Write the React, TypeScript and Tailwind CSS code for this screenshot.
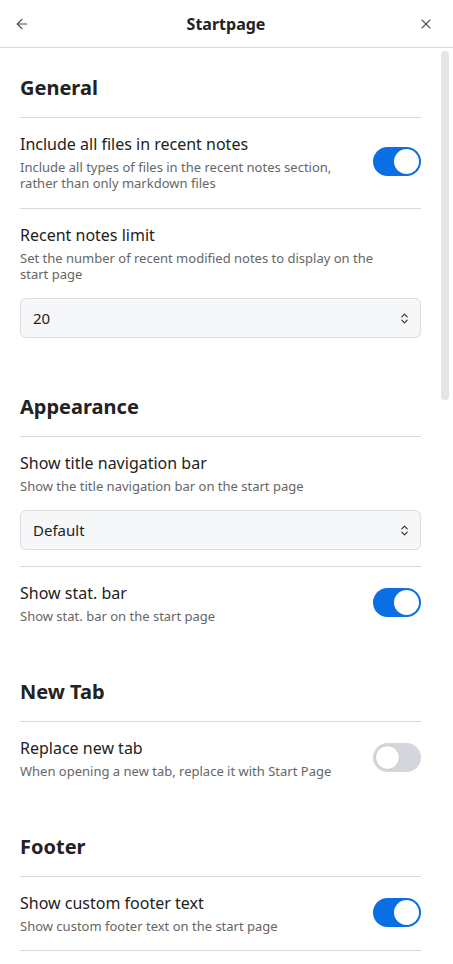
import { ArrowLeft, X, ChevronsUpDown } from 'lucide-react'

type Item =
  | { kind: 'toggle'; name: string; desc: string; on: boolean }
  | { kind: 'select'; name: string; desc: string; value: string }

interface Section {
  title: string
  items: Item[]
}

const SECTIONS: Section[] = [
  {
    title: 'General',
    items: [
      {
        kind: 'toggle',
        name: 'Include all files in recent notes',
        desc: 'Include all types of files in the recent notes section, rather than only markdown files',
        on: true,
      },
      {
        kind: 'select',
        name: 'Recent notes limit',
        desc: 'Set the number of recent modified notes to display on the start page',
        value: '20',
      },
    ],
  },
  {
    title: 'Appearance',
    items: [
      {
        kind: 'select',
        name: 'Show title navigation bar',
        desc: 'Show the title navigation bar on the start page',
        value: 'Default',
      },
      { kind: 'toggle', name: 'Show stat. bar', desc: 'Show stat. bar on the start page', on: true },
    ],
  },
  {
    title: 'New Tab',
    items: [
      {
        kind: 'toggle',
        name: 'Replace new tab',
        desc: 'When opening a new tab, replace it with Start Page',
        on: false,
      },
    ],
  },
  {
    title: 'Footer',
    items: [
      {
        kind: 'toggle',
        name: 'Show custom footer text',
        desc: 'Show custom footer text on the start page',
        on: true,
      },
    ],
  },
]

function Toggle({ on }: { on: boolean }) {
  return (
    <div
      className={`shrink-0 w-12 h-[29px] rounded-full flex items-center px-[2px] ${
        on ? 'bg-[#0a6fe3] justify-end' : 'bg-[#d3d7dc] justify-start'
      }`}
    >
      <div
        className={`w-[25px] h-[25px] rounded-full bg-white ${on ? '' : 'border border-[#c4c8ce]'}`}
      />
    </div>
  )
}

function Select({ value }: { value: string }) {
  return (
    <div className="mt-[16px] h-[40px] rounded-md border border-[#d9dce1] bg-[#f6f7f9] flex items-center justify-between pl-3 pr-[9px]">
      <span className="text-[15px] text-[#222]">{value}</span>
      <ChevronsUpDown className="w-[13px] h-[13px] text-[#333]" strokeWidth={2.2} />
    </div>
  )
}

function Setting({ item, first }: { item: Item; first: boolean }) {
  if (item.kind === 'select') {
    return (
      <div className="pt-[14px] pb-[16px] border-t border-[#d6d9de]">
        <div className="text-[16px] leading-6 text-[#222]">{item.name}</div>
        <div className="text-[13px] leading-4 text-[#666] mt-[3px] pr-10">{item.desc}</div>
        <Select value={item.value} />
      </div>
    )
  }
  return (
    <div
      className={`pt-[14px] border-t border-[#d6d9de] flex items-center justify-between gap-6 ${
        first ? 'pb-[17px]' : 'pb-[16px]'
      }`}
    >
      <div className="min-w-0">
        <div className="text-[16px] leading-6 text-[#222]">{item.name}</div>
        <div className="text-[13px] leading-4 text-[#666] mt-[3px]">{item.desc}</div>
      </div>
      <Toggle on={item.on} />
    </div>
  )
}

export default function App() {
  return (
    <div
      className="w-[453px] h-[964px] bg-white flex flex-col overflow-hidden"
      style={{ fontFamily: '"Noto Sans", "Open Sans", sans-serif' }}
    >
      <header className="h-[48px] shrink-0 border-b border-[#d8d8e2] flex items-center justify-between pl-[14px] pr-[19px]">
        <ArrowLeft className="w-[16px] h-[16px] text-[#444]" strokeWidth={1.7} />
        <h1 className="text-[16px] font-bold text-[#222] pl-[4px]">Startpage</h1>
        <X className="w-[16px] h-[16px] text-[#555]" strokeWidth={1.6} />
      </header>
      <div className="flex-1 flex min-h-0">
        <main className="flex-1 pl-5 pr-[20px] pt-[26px]">
          {SECTIONS.map((s, i) => (
            <section key={s.title} className={i === 0 ? '' : i === 1 ? 'mt-[39px]' : 'mt-[38px]'}>
              <h2 className="text-[20px] font-bold text-[#222] leading-7 pb-[15px]">{s.title}</h2>
              {s.items.map((it, j) => (
                <Setting key={it.name} item={it} first={i === 0 && j === 0} />
              ))}
              {i === SECTIONS.length - 1 && <div className="border-t border-[#d6d9de]" />}
            </section>
          ))}
        </main>
        <div className="w-[12px] shrink-0 pt-[3px] pr-[3px]">
          <div className="w-[8px] h-[349px] rounded-full bg-[#e5e5e5]" />
        </div>
      </div>
    </div>
  )
}
